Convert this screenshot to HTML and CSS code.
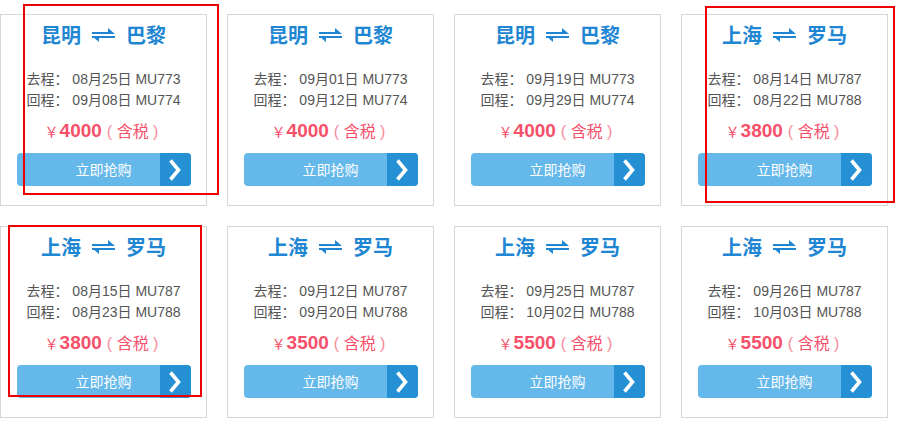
FILE: index.html
```html
<!DOCTYPE html>
<html lang="zh-CN">
<head>
<meta charset="utf-8">
<title>特价机票</title>
<link rel="stylesheet" href="styles.css">
</head>
<body>
<div class="grid">
  <div class="card">
    <div class="title"><span>昆明</span><svg class="swap" width="23" height="14" viewBox="0 0 23 14"><path d="M0 4h16v-4l7 6h-23z" fill="currentColor"/><path d="M23 8h-16v6l-7-6z" fill="currentColor"/><rect x="0" y="8" width="23" height="2" fill="currentColor"/></svg><span>巴黎</span></div>
    <div class="info">去程： 08月25日 MU773</div>
    <div class="info">回程： 09月08日 MU774</div>
    <div class="price"><span class="yen">￥</span><b>4000</b><span class="tax"><span class="paren">(</span> 含税 <span class="paren">)</span></span></div>
    <a class="buy" href="#"><span class="buy-text">立即抢购</span><span class="buy-go"><svg width="14" height="22" viewBox="0 0 14 22"><polyline points="2.5,1.5 10.5,11 2.5,20.5" fill="none" stroke="#fff" stroke-width="3.6"/></svg></span></a>
  </div>
  <div class="card">
    <div class="title"><span>昆明</span><svg class="swap" width="23" height="14" viewBox="0 0 23 14"><path d="M0 4h16v-4l7 6h-23z" fill="currentColor"/><path d="M23 8h-16v6l-7-6z" fill="currentColor"/><rect x="0" y="8" width="23" height="2" fill="currentColor"/></svg><span>巴黎</span></div>
    <div class="info">去程： 09月01日 MU773</div>
    <div class="info">回程： 09月12日 MU774</div>
    <div class="price"><span class="yen">￥</span><b>4000</b><span class="tax"><span class="paren">(</span> 含税 <span class="paren">)</span></span></div>
    <a class="buy" href="#"><span class="buy-text">立即抢购</span><span class="buy-go"><svg width="14" height="22" viewBox="0 0 14 22"><polyline points="2.5,1.5 10.5,11 2.5,20.5" fill="none" stroke="#fff" stroke-width="3.6"/></svg></span></a>
  </div>
  <div class="card">
    <div class="title"><span>昆明</span><svg class="swap" width="23" height="14" viewBox="0 0 23 14"><path d="M0 4h16v-4l7 6h-23z" fill="currentColor"/><path d="M23 8h-16v6l-7-6z" fill="currentColor"/><rect x="0" y="8" width="23" height="2" fill="currentColor"/></svg><span>巴黎</span></div>
    <div class="info">去程： 09月19日 MU773</div>
    <div class="info">回程： 09月29日 MU774</div>
    <div class="price"><span class="yen">￥</span><b>4000</b><span class="tax"><span class="paren">(</span> 含税 <span class="paren">)</span></span></div>
    <a class="buy" href="#"><span class="buy-text">立即抢购</span><span class="buy-go"><svg width="14" height="22" viewBox="0 0 14 22"><polyline points="2.5,1.5 10.5,11 2.5,20.5" fill="none" stroke="#fff" stroke-width="3.6"/></svg></span></a>
  </div>
  <div class="card">
    <div class="title"><span>上海</span><svg class="swap" width="23" height="14" viewBox="0 0 23 14"><path d="M0 4h16v-4l7 6h-23z" fill="currentColor"/><path d="M23 8h-16v6l-7-6z" fill="currentColor"/><rect x="0" y="8" width="23" height="2" fill="currentColor"/></svg><span>罗马</span></div>
    <div class="info">去程： 08月14日 MU787</div>
    <div class="info">回程： 08月22日 MU788</div>
    <div class="price"><span class="yen">￥</span><b>3800</b><span class="tax"><span class="paren">(</span> 含税 <span class="paren">)</span></span></div>
    <a class="buy" href="#"><span class="buy-text">立即抢购</span><span class="buy-go"><svg width="14" height="22" viewBox="0 0 14 22"><polyline points="2.5,1.5 10.5,11 2.5,20.5" fill="none" stroke="#fff" stroke-width="3.6"/></svg></span></a>
  </div>
  <div class="card">
    <div class="title"><span>上海</span><svg class="swap" width="23" height="14" viewBox="0 0 23 14"><path d="M0 4h16v-4l7 6h-23z" fill="currentColor"/><path d="M23 8h-16v6l-7-6z" fill="currentColor"/><rect x="0" y="8" width="23" height="2" fill="currentColor"/></svg><span>罗马</span></div>
    <div class="info">去程： 08月15日 MU787</div>
    <div class="info">回程： 08月23日 MU788</div>
    <div class="price"><span class="yen">￥</span><b>3800</b><span class="tax"><span class="paren">(</span> 含税 <span class="paren">)</span></span></div>
    <a class="buy" href="#"><span class="buy-text">立即抢购</span><span class="buy-go"><svg width="14" height="22" viewBox="0 0 14 22"><polyline points="2.5,1.5 10.5,11 2.5,20.5" fill="none" stroke="#fff" stroke-width="3.6"/></svg></span></a>
  </div>
  <div class="card">
    <div class="title"><span>上海</span><svg class="swap" width="23" height="14" viewBox="0 0 23 14"><path d="M0 4h16v-4l7 6h-23z" fill="currentColor"/><path d="M23 8h-16v6l-7-6z" fill="currentColor"/><rect x="0" y="8" width="23" height="2" fill="currentColor"/></svg><span>罗马</span></div>
    <div class="info">去程： 09月12日 MU787</div>
    <div class="info">回程： 09月20日 MU788</div>
    <div class="price"><span class="yen">￥</span><b>3500</b><span class="tax"><span class="paren">(</span> 含税 <span class="paren">)</span></span></div>
    <a class="buy" href="#"><span class="buy-text">立即抢购</span><span class="buy-go"><svg width="14" height="22" viewBox="0 0 14 22"><polyline points="2.5,1.5 10.5,11 2.5,20.5" fill="none" stroke="#fff" stroke-width="3.6"/></svg></span></a>
  </div>
  <div class="card">
    <div class="title"><span>上海</span><svg class="swap" width="23" height="14" viewBox="0 0 23 14"><path d="M0 4h16v-4l7 6h-23z" fill="currentColor"/><path d="M23 8h-16v6l-7-6z" fill="currentColor"/><rect x="0" y="8" width="23" height="2" fill="currentColor"/></svg><span>罗马</span></div>
    <div class="info">去程： 09月25日 MU787</div>
    <div class="info">回程： 10月02日 MU788</div>
    <div class="price"><span class="yen">￥</span><b>5500</b><span class="tax"><span class="paren">(</span> 含税 <span class="paren">)</span></span></div>
    <a class="buy" href="#"><span class="buy-text">立即抢购</span><span class="buy-go"><svg width="14" height="22" viewBox="0 0 14 22"><polyline points="2.5,1.5 10.5,11 2.5,20.5" fill="none" stroke="#fff" stroke-width="3.6"/></svg></span></a>
  </div>
  <div class="card">
    <div class="title"><span>上海</span><svg class="swap" width="23" height="14" viewBox="0 0 23 14"><path d="M0 4h16v-4l7 6h-23z" fill="currentColor"/><path d="M23 8h-16v6l-7-6z" fill="currentColor"/><rect x="0" y="8" width="23" height="2" fill="currentColor"/></svg><span>罗马</span></div>
    <div class="info">去程： 09月26日 MU787</div>
    <div class="info">回程： 10月03日 MU788</div>
    <div class="price"><span class="yen">￥</span><b>5500</b><span class="tax"><span class="paren">(</span> 含税 <span class="paren">)</span></span></div>
    <a class="buy" href="#"><span class="buy-text">立即抢购</span><span class="buy-go"><svg width="14" height="22" viewBox="0 0 14 22"><polyline points="2.5,1.5 10.5,11 2.5,20.5" fill="none" stroke="#fff" stroke-width="3.6"/></svg></span></a>
  </div>
</div>
<div class="mark mark-1"></div>
<div class="mark mark-2"></div>
<div class="mark mark-3"></div>
</body>
</html>
```

FILE: styles.css
```css
* { box-sizing: border-box; }
html, body { margin: 0; padding: 0; background: #fff; }
body {
  font-family: "Liberation Sans", Arial, "Noto Sans CJK SC", sans-serif;
  position: relative;
  width: 910px;
  height: 427px;
  overflow: hidden;
}
.grid {
  display: flex;
  flex-wrap: wrap;
  gap: 20px;
  padding-top: 14px;
  width: 910px;
}
.card {
  width: 207px;
  height: 192px;
  border: 1px solid #d6d6d6;
  display: flex;
  flex-direction: column;
  align-items: center;
  padding-top: 5px;
}
.title {
  display: flex;
  align-items: center;
  justify-content: center;
  gap: 11px;
  height: 30px;
  font-family: "Noto Sans CJK SC", sans-serif;
  font-size: 20px;
  font-weight: bold;
  color: #1e86d2;
  line-height: 30px;
}
.swap { display: block; margin-top: -1px; }
.info {
  font-family: "Liberation Sans", Arial, "Noto Sans CJK SC", sans-serif;
  font-size: 14px;
  color: #555;
  line-height: 21px;
  white-space: nowrap;
}
.title + .info { margin-top: 19px; }
.price {
  margin-top: 5px;
  height: 30px;
  line-height: 30px;
  color: #f6506a;
  white-space: nowrap;
  display: flex;
  align-items: baseline;
  margin-left: -4px;
}
.yen {
  font-family: "Noto Sans CJK SC", sans-serif;
  font-size: 14px;
  margin-right: 1px;
}
.price b {
  font-family: "Liberation Sans", Arial, sans-serif;
  font-size: 19px;
  font-weight: bold;
}
.tax {
  font-family: "Liberation Sans", Arial, "Noto Sans CJK SC", sans-serif;
  font-size: 16px;
  margin-left: 5px;
  white-space: pre;
}
.paren {
  font-weight: 300;
  color: #f88a9a;
}
.buy {
  margin-top: 7px;
  width: 174px;
  height: 33px;
  border-radius: 4px;
  background: #64b8ea;
  display: flex;
  position: relative;
  overflow: hidden;
  text-decoration: none;
}
.buy-text {
  position: absolute;
  left: 0;
  right: 0;
  top: 0;
  bottom: 0;
  text-align: center;
  line-height: 33px;
  color: #fff;
  font-family: "Noto Sans CJK SC", sans-serif;
  font-size: 14px;
}
.buy-go {
  margin-left: auto;
  width: 31px;
  height: 33px;
  background: #2590d3;
  display: flex;
  align-items: center;
  justify-content: center;
  position: relative;
}
.mark {
  position: absolute;
  border: 2px solid #ee0000;
  pointer-events: none;
}
.mark-1 { left: 23px; top: 4px; width: 196px; height: 191px; }
.mark-2 { left: 705px; top: 6px; width: 190px; height: 197px; }
.mark-3 { left: 8px; top: 225px; width: 194px; height: 172px; }
```
